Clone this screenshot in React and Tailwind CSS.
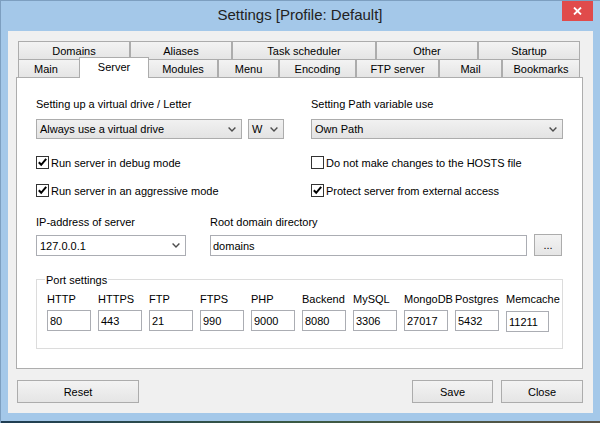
import React from 'react';

const ui = "font-['Liberation_Sans',Arial,sans-serif] text-[11px] leading-[14px] text-black";
const grad = 'bg-linear-to-b from-[#f3f3f3] to-[#e5e5e5]';

const row1 = [
  { label: 'Domains', cls: 'w-[112px]' },
  { label: 'Aliases', cls: 'w-[102px]' },
  { label: 'Task scheduler', cls: 'w-[144px]' },
  { label: 'Other', cls: 'w-[102px]' },
  { label: 'Startup', cls: 'w-[102px]' },
];

const row2 = [
  { label: 'Main', cls: 'w-[62px] pr-[6px]' },
  { label: 'Server', active: true },
  { label: 'Modules', cls: 'w-[70px]' },
  { label: 'Menu', cls: 'w-[61px]' },
  { label: 'Encoding', cls: 'w-[77px]' },
  { label: 'FTP server', cls: 'w-[83px]' },
  { label: 'Mail', cls: 'w-[63px]' },
  { label: 'Bookmarks', cls: 'w-[78px]' },
];

const ports = [
  ['HTTP', '80'],
  ['HTTPS', '443'],
  ['FTP', '21'],
  ['FTPS', '990'],
  ['PHP', '9000'],
  ['Backend', '8080'],
  ['MySQL', '3306'],
  ['MongoDB', '27017'],
  ['Postgres', '5432'],
  ['Memcache', '11211'],
];

function Chevron() {
  return (
    <svg width="8" height="5" viewBox="0 0 8 5" className="shrink-0">
      <path d="M0.6 0.6 L4 4 L7.4 0.6" fill="none" stroke="#4d4d4d" strokeWidth="1.4" />
    </svg>
  );
}

function Select({ value, className, white }) {
  const skin = white ? 'bg-white border-[#abadb3]' : 'bg-linear-to-b from-[#f1f1f1] to-[#e3e3e3] border-[#acacac]';
  return (
    <div className={`flex items-center justify-between pl-[3px] pr-[5px] border ${skin} ${className}`}>
      <span className="whitespace-nowrap">{value}</span>
      <Chevron />
    </div>
  );
}

function Check({ checked, label }) {
  return (
    <div className="flex items-center h-[13px] gap-[2px]">
      <span className="w-[13px] h-[13px] border border-[#333] bg-white flex items-center justify-center shrink-0">
        {checked && (
          <svg width="11" height="11" viewBox="0 0 11 11">
            <path d="M1.8 5.2 L4.2 7.8 L9.2 1.8" fill="none" stroke="#000" strokeWidth="2" />
          </svg>
        )}
      </span>
      <span className="whitespace-nowrap">{label}</span>
    </div>
  );
}

export default function App() {
  return (
    <div className={`w-[600px] h-[423px] bg-[#a4c8e9] border-l border-t border-[#7d9fc0] flex flex-col overflow-hidden ${ui}`}>
      {/* title bar */}
      <div className="h-[30px] flex shrink-0">
        <div className="w-[37px]" />
        <div className="flex-1 flex justify-center pt-[5px]">
          <span className="text-[15px] leading-[18px] text-[#222]">Settings [Profile: Default]</span>
        </div>
        <div className="w-[31px] h-[21px] -mt-[1px] bg-[#e04b4b] flex items-center justify-center">
          <svg width="9" height="8" viewBox="0 0 9 8">
            <path d="M1 0.5 L8 7.5 M8 0.5 L1 7.5" stroke="#fff" strokeWidth="1.8" />
          </svg>
        </div>
        <div className="w-[7px]" />
      </div>

      {/* client area */}
      <div className="w-[585px] h-[382px] ml-[7px] bg-[#f0f0f0] pl-[8px] pt-[10px] flex flex-col shrink-0">
        {/* tabs */}
        <div className="ml-[2px] w-[562px]">
          <div className="flex h-[18px]">
            {row1.map(t => (
              <div key={t.label} className={`${t.cls} h-[18px] border-t border-x border-[#acacac] ${grad} flex items-center justify-center pt-[1px]`}>
                {t.label}
              </div>
            ))}
          </div>
          <div className="flex h-[18px]">
            {row2.map(t =>
              t.active ? (
                <div key={t.label} className="relative z-10 w-[70px] h-[21px] -mt-[2px] -mx-[1px] bg-white border-t border-x border-[#acacac] flex justify-center pt-[2px]">
                  {t.label}
                </div>
              ) : (
                <div key={t.label} className={`${t.cls} h-[18px] border-t border-x border-[#acacac] ${grad} flex items-center justify-center pt-[1px]`}>
                  {t.label}
                </div>
              )
            )}
          </div>
        </div>

        {/* panel */}
        <div className="w-[567px] h-[292px] bg-white border border-[#adadad] pl-[19px] pt-[19px] flex flex-col">
          <div className="flex">
            <div className="w-[248px] flex flex-col">
              <div>Setting up a virtual drive / Letter</div>
              <div className="mt-[8px] flex gap-[6px]">
                <Select value="Always use a virtual drive" className="w-[206px] h-[20px]" />
                <Select value="W" className="w-[36px] h-[20px]" />
              </div>
              <div className="mt-[17px]"><Check checked label="Run server in debug mode" /></div>
              <div className="mt-[15px]"><Check checked label="Run server in an aggressive mode" /></div>
            </div>
            <div className="w-[252px] ml-[27px] flex flex-col">
              <div>Setting Path variable use</div>
              <div className="mt-[8px]">
                <Select value="Own Path" className="w-[252px] h-[20px]" />
              </div>
              <div className="mt-[17px]"><Check label="Do not make changes to the HOSTS file" /></div>
              <div className="mt-[15px]"><Check checked label="Protect server from external access" /></div>
            </div>
          </div>

          <div className="flex mt-[18px]">
            <div className="w-[150px] flex flex-col">
              <div>IP-address of server</div>
              <div className="mt-[6px]">
                <Select white value="127.0.0.1" className="w-[150px] h-[21px] pr-[4px]" />
              </div>
            </div>
            <div className="ml-[24px] flex flex-col">
              <div>Root domain directory</div>
              <div className="mt-[6px] flex items-start">
                <div className="w-[317px] h-[21px] border border-[#abadb3] bg-white pl-[2px] flex items-center">domains</div>
                <div className={`ml-[7px] -mt-[1px] w-[28px] h-[22px] border border-[#acacac] ${grad} flex items-center justify-center`}>...</div>
              </div>
            </div>
          </div>

          <div className="relative mt-[23px] w-[527px] h-[70px] border border-[#dcdcdc] pl-[10px] pt-[12px]">
            <div className="absolute -top-[7px] left-[8px] px-[1px] bg-white">Port settings</div>
            <div className="flex gap-[7px]">
              {ports.map(([name, val], i) => (
                <div key={name} className="w-[44px] flex flex-col">
                  <div className="whitespace-nowrap">{name}</div>
                  <div className={`${i === 9 ? 'mt-[5px] w-[43px]' : 'mt-[4px] w-[44px]'} h-[21px] border border-[#abadb3] bg-white pl-[2px] flex items-center`}>
                    {val}
                  </div>
                </div>
              ))}
            </div>
          </div>
        </div>

        {/* buttons */}
        <div className="mt-[11px] flex w-[567px]">
          <div className={`ml-[1px] w-[122px] h-[23px] border border-[#acacac] ${grad} flex items-center justify-center`}>Reset</div>
          <div className="flex-1" />
          <div className={`w-[81px] h-[23px] border border-[#acacac] ${grad} flex items-center justify-center`}>Save</div>
          <div className={`ml-[8px] w-[82px] h-[23px] border border-[#acacac] ${grad} flex items-center justify-center`}>Close</div>
        </div>
      </div>

      {/* frame bottom + desktop peek */}
      <div className="h-[8px] shrink-0" />
      <div className="h-[2px] shrink-0 bg-linear-to-r from-[#1f3d52] via-[#3b5a44] to-[#5a5448]" />
    </div>
  );
}
